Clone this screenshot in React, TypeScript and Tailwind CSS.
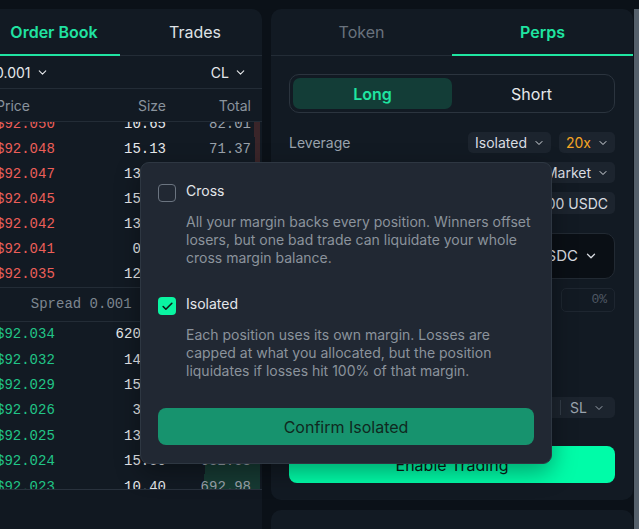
import React from 'react';
import { Check, ChevronDown } from 'lucide-react';

type Level = { price: string; size: string; total: string; depth: number };

const asks: Level[] = [
  { price: '$92.050', size: '10.65', total: '82.01', depth: 6 },
  { price: '$92.048', size: '15.13', total: '71.37', depth: 5 },
  { price: '$92.047', size: '13.86', total: '56.24', depth: 4 },
  { price: '$92.045', size: '15.21', total: '42.38', depth: 3 },
  { price: '$92.042', size: '13.45', total: '27.17', depth: 2 },
  { price: '$92.041', size: '0.84', total: '13.72', depth: 1 },
  { price: '$92.035', size: '12.88', total: '12.88', depth: 1 },
];

const bids: Level[] = [
  { price: '$92.034', size: '620.14', total: '620.14', depth: 50 },
  { price: '$92.032', size: '14.22', total: '634.36', depth: 51 },
  { price: '$92.029', size: '15.06', total: '649.42', depth: 52 },
  { price: '$92.026', size: '3.95', total: '653.37', depth: 53 },
  { price: '$92.025', size: '13.71', total: '667.08', depth: 54 },
  { price: '$92.024', size: '15.50', total: '682.58', depth: 55 },
  { price: '$92.023', size: '10.40', total: '692.98', depth: 56 },
];

const mono = { fontFamily: '"Liberation Mono", monospace' };

const BookRow = ({ level, side, height }: { level: Level; side: 'ask' | 'bid'; height: string }) => (
  <div className={`relative shrink-0 ${height} grid grid-cols-[1fr_85px_85px] items-center pl-[20px] pr-[11px] text-[14px]`} style={mono}>
    {/* depth bar */}
    <div
      className={`absolute right-[2px] top-0 bottom-0 ${side === 'ask' ? 'bg-[#3a2529]' : 'bg-[#163a33]'}`}
      style={{ width: level.depth }}
    />
    <span className={`relative ${side === 'ask' ? 'text-[#ec5f59]' : 'text-[#21c487]'}`}>{level.price}</span>
    <span className="relative text-right text-[#e6e8eb]">{level.size}</span>
    <span className="relative text-right text-[#9aa2ab]">{level.total}</span>
  </div>
);

const Chip = ({ children, className = '' }: { children: React.ReactNode; className?: string }) => (
  <div className={`flex items-center gap-[6px] rounded-[5px] bg-[#1c242e] pl-[7px] pr-[6px] text-[14px] text-[#d9dde2] ${className}`}>
    {children}
  </div>
);

export default function App() {
  return (
    <div
      className="relative flex h-[529px] overflow-hidden bg-[#0b1118] pt-[9px]"
      style={{ fontFamily: 'Inter, "Noto Sans", sans-serif' }}
    >
      {/* Order book panel */}
      <div className="ml-[-24px] flex w-[286px] shrink-0 flex-col rounded-tr-[10px] bg-[#121a23]">
        <div className="flex h-[47px] shrink-0 border-b border-[#232c36]">
          <div className="relative flex w-[144px] items-center justify-center pl-[12px] text-[16px] font-semibold text-[#20e3a2]">
            Order Book
            <div className="absolute bottom-[-1px] left-0 right-0 h-[2px] bg-[#20e3a2]" />
          </div>
          <div className="flex flex-1 items-center justify-center pl-[8px] text-[16px] text-[#dfe2e6]">
            Trades
          </div>
        </div>

        <div className="flex h-[33px] shrink-0 items-center justify-between border-b border-[#232c36] pl-[19px] pr-[15px] text-[14px] text-[#e6e8eb]">
          <div className="flex items-center gap-[5px]">
            0.001 <ChevronDown size={13} strokeWidth={2} />
          </div>
          <div className="flex items-center gap-[5px]">
            CL <ChevronDown size={13} strokeWidth={2} />
          </div>
        </div>

        <div className="grid h-[33px] shrink-0 grid-cols-[1fr_85px_85px] items-center border-b border-[#232c36] pl-[20px] pr-[11px] text-[14px] text-[#8a939d]">
          <span>Price</span>
          <span className="text-right">Size</span>
          <span className="text-right">Total</span>
        </div>

        <div className="flex h-[165px] shrink-0 flex-col justify-end overflow-hidden">
          {asks.map((a) => (
            <BookRow key={a.price} level={a} side="ask" height="h-[25px]" />
          ))}
        </div>

        <div
          className="flex h-[35px] shrink-0 items-center justify-center border-y border-[#232c36] text-[14px] text-[#7d8690]"
          style={mono}
        >
          Spread 0.001 (0.001%)
        </div>

        <div className="flex h-[167px] shrink-0 flex-col overflow-hidden">
          {bids.map((b) => (
            <BookRow key={b.price} level={b} side="bid" height="h-[25.4px]" />
          ))}
        </div>

        <div className="flex-1 border-t border-[#29323d] bg-[#111821]" />
      </div>

      {/* Trade form column */}
      <div className="ml-[9px] flex w-[362px] shrink-0 flex-col gap-[10px]">
        <div className="flex h-[491px] shrink-0 flex-col rounded-[10px] bg-[#121a23]">
          <div className="flex h-[47px] shrink-0 border-b border-[#232c36] text-[16px]">
            <div className="flex flex-1 items-center justify-center text-[#69727d]">Token</div>
            <div className="relative flex flex-1 items-center justify-center font-semibold text-[#1fe5a1]">
              Perps
              <div className="absolute bottom-[-1px] left-0 right-0 h-[2px] bg-[#1fe5a1]" />
            </div>
          </div>

          <div className="flex flex-col px-[18px] pt-[18px]">
            <div className="flex h-[39px] rounded-[10px] border border-[#2b343e] p-[3px]">
              <div className="flex flex-1 items-center justify-center rounded-[7px] bg-[#133d37] text-[16px] font-semibold text-[#1fe5a1]">
                Long
              </div>
              <div className="flex flex-1 items-center justify-center text-[16px] text-[#e6e8eb]">Short</div>
            </div>

            <div className="mt-[19px] flex h-[21px] items-center justify-between">
              <span className="text-[14px] text-[#9aa3ad]">Leverage</span>
              <div className="flex h-full gap-[8px]">
                <Chip>
                  Isolated <ChevronDown size={12} strokeWidth={2} />
                </Chip>
                <Chip className="text-[#f5a524]">
                  20x <ChevronDown size={12} strokeWidth={2} className="text-[#d9dde2]" />
                </Chip>
              </div>
            </div>

            <div className="mt-[9px] flex h-[21px] items-center justify-between">
              <span className="text-[14px] text-[#9aa3ad]">Order Type</span>
              <Chip className="h-full">
                Market <ChevronDown size={12} strokeWidth={2} />
              </Chip>
            </div>

            <div className="mt-[9px] flex h-[22px] items-center justify-between">
              <span className="text-[14px] text-[#9aa3ad]">Available</span>
              <Chip className="h-full pr-[7px]">1,000.00 USDC</Chip>
            </div>

            <div className="mt-[19px] flex h-[46px] items-center justify-between rounded-[10px] border border-[#222a33] bg-[#0a0f15] pl-[14px] pr-[16px]">
              <span className="text-[16px] text-[#4d5661]">0.00</span>
              <div className="flex items-center gap-[6px] text-[15px] text-[#d9dde2]">
                USDC <ChevronDown size={14} strokeWidth={2.2} />
              </div>
            </div>

            <div className="mt-[9px] flex h-[24px] items-center gap-[12px]">
              <div className="h-[4px] flex-1 rounded-full bg-[#232c36]" />
              <div
                className="flex h-full w-[54px] items-center justify-end rounded-[5px] border border-[#1e2630] pr-[7px] text-[13px] text-[#4f5863]"
                style={mono}
              >
                0%
              </div>
            </div>

            <div className="mt-[85px] flex h-[21px] items-center justify-between">
              <span className="text-[14px] text-[#9aa3ad]">Take Profit / Stop Loss</span>
              <div className="flex h-full items-center rounded-[5px] bg-[#1c242e] text-[14px] text-[#9aa3ad]">
                <span className="px-[8px]">TP</span>
                <div className="h-[15px] w-px bg-[#333c47]" />
                <span className="flex items-center gap-[6px] pl-[9px] pr-[10px]">
                  SL <ChevronDown size={12} strokeWidth={2} />
                </span>
              </div>
            </div>

            <button className="mt-[28px] flex h-[37px] items-center justify-center rounded-[8px] bg-[#00fca8] text-[16px] text-[#0b1a15]">
              Enable Trading
            </button>
          </div>
        </div>
        <div className="flex-1 rounded-t-[10px] bg-[#121a23]" />
      </div>

      {/* scroll track */}
      <div className="ml-px w-[5px] shrink-0 bg-[#55606b]" />

      {/* Margin mode popover */}
      <div className="absolute left-[140px] top-[162px] flex w-[412px] flex-col rounded-[9px] border border-[#2e3742] bg-[#212833] px-[17px] pb-[18px] pt-[18px] shadow-[0_8px_24px_rgba(0,0,0,0.35)]">
        <div className="flex items-start gap-[10px]">
          <div className="mt-[3px] h-[18px] w-[18px] shrink-0 rounded-[4px] border-[1.5px] border-[#6b7480]" />
          <div className="flex flex-col">
            <span className="text-[14px] leading-[20px] text-[#e3e6ea]">Cross</span>
            <p className="mt-[12px] text-[14px] leading-[18px] text-[#8b939c]">
              All your margin backs every position. Winners offset losers, but one bad trade can liquidate your whole
              cross margin balance.
            </p>
          </div>
        </div>

        <div className="mt-[27px] flex items-start gap-[10px]">
          <div className="mt-[3px] flex h-[18px] w-[18px] shrink-0 items-center justify-center rounded-[4px] bg-[#0af5a2]">
            <Check size={13} strokeWidth={3} className="text-[#0d1a16]" />
          </div>
          <div className="flex flex-col">
            <span className="text-[14px] leading-[20px] text-[#e3e6ea]">Isolated</span>
            <p className="mt-[12px] text-[14px] leading-[18px] text-[#8b939c]">
              Each position uses its own margin. Losses are capped at what you allocated, but the position liquidates if
              losses hit 100% of that margin.
            </p>
          </div>
        </div>

        <button className="mt-[28px] flex h-[37px] items-center justify-center rounded-[8px] bg-[#17936e] text-[16px] text-[#0f2920]">
          Confirm Isolated
        </button>
      </div>
    </div>
  );
}
